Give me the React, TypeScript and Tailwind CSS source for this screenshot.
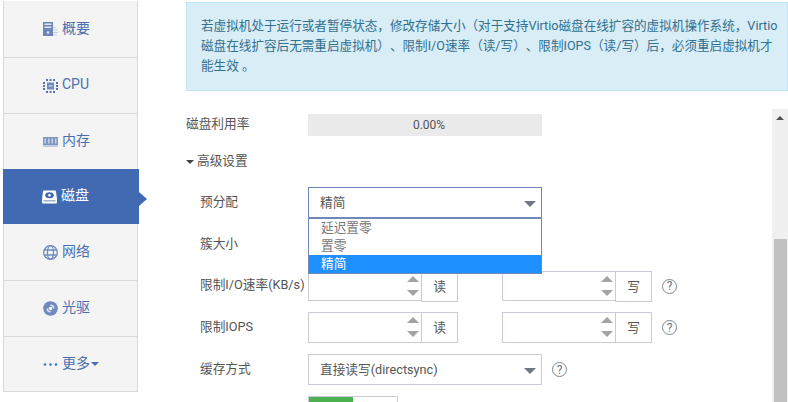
import type { ReactNode } from "react";

const iconColor = "#6f8bbd";

function ServerIcon() {
  return (
    <svg width="15" height="14" viewBox="0 0 15 14">
      <path d="M0 0h10v14H0z" fill="#6c86b8" />
      <path d="M1.500 1.500h7v1.500h-7zM1.500 4.500h7v1.500h-7z" fill="#dfe5f0" />
      <circle cx="5" cy="10.500" r="1.300" fill="#dfe5f0" />
      <path d="M10 5h3v1h-3zM10 7.500h5v1h-5zM10 10h5v1h-5zM10 12.500h4v1h-4z" fill="#c3cee2" />
    </svg>
  );
}

function CpuIcon() {
  return (
    <svg width="15" height="14" viewBox="0 0 15 14">
      <path d="M4 3.500h7v7H4z" fill={iconColor} />
      <path d="M5.500 6h4v2h-4z" fill="#a9bad8" />
      <path
        d="M3 0h2v2H3zM6.500 0h2v2h-2zM10 0h2v2h-2zM3 12h2v2H3zM6.500 12h2v2h-2zM10 12h2v2h-2zM0 3h2v2H0zM0 6h2v2H0zM0 9h2v2H0zM13 3h2v2h-2zM13 6h2v2h-2zM13 9h2v2h-2z"
        fill="#4f73b3"
      />
    </svg>
  );
}

function MemoryIcon() {
  return (
    <svg width="15" height="10" viewBox="0 0 15 10">
      <path d="M0 0h15v8H0z" fill="#7f97c3" />
      <path d="M1.500 1.500h1.500v5H1.500zM5 1.500h1.500v5H5zM8.500 1.500h1.500v5H8.500zM12 1.500h1.500v5H12z" fill="#c5d0e4" />
      <path d="M0 8h15v2H0z" fill="#c3cee2" />
    </svg>
  );
}

function DiskIcon() {
  return (
    <svg width="15" height="14" viewBox="0 0 15 14">
      <path d="M2 .5h11a1 1 0 0 1 1 1L15 9v3.500a1 1 0 0 1-1 1H1a1 1 0 0 1-1-1V9l1-7.500a1 1 0 0 1 1-1z" fill="#fff" />
      <ellipse cx="7.500" cy="5.200" rx="4.300" ry="3" fill="#4169b0" />
      <circle cx="7.500" cy="5.200" r="1.300" fill="#fff" />
      <path d="M1.500 10.500h12v.8h-12z" fill="#4169b0" />
    </svg>
  );
}

function GlobeIcon() {
  return (
    <svg width="15" height="15" viewBox="0 0 15 15" fill="none" stroke={iconColor} strokeWidth="1.300">
      <circle cx="7.500" cy="7.500" r="6.800" />
      <ellipse cx="7.500" cy="7.500" rx="3" ry="6.800" />
      <path d="M1 5h13M1 10h13" />
    </svg>
  );
}

function DiscIcon() {
  return (
    <svg width="15" height="15" viewBox="0 0 15 15">
      <circle cx="7.500" cy="7.500" r="7.300" fill={iconColor} />
      <path d="M7.500 3.500a4 4 0 0 1 4 4h-1.500a2.500 2.500 0 0 0-2.500-2.500zM7.500 11.500a4 4 0 0 1-4-4h1.500a2.500 2.500 0 0 0 2.500 2.500z" fill="#dfe5f0" />
      <circle cx="7.500" cy="7.500" r="1.800" fill="#f4f4f4" />
    </svg>
  );
}

function MoreIcon() {
  return (
    <svg width="15" height="15" viewBox="0 0 15 15" fill="#2f7cc4">
      <circle cx="2" cy="7.500" r="1.300" />
      <circle cx="7.500" cy="7.500" r="1.300" />
      <circle cx="13" cy="7.500" r="1.300" />
    </svg>
  );
}

function HelpIcon() {
  return (
    <div className="flex size-[15px] items-center justify-center rounded-full border border-[#7d8595] text-[12px] leading-none text-[#6f7685]">
      ?
    </div>
  );
}

const items: { label: string; icon: ReactNode; h: string; active?: boolean; more?: boolean }[] = [
  { label: "概要", icon: <ServerIcon />, h: "h-[57px] border-t" },
  { label: "CPU", icon: <CpuIcon />, h: "h-[56px]" },
  { label: "内存", icon: <MemoryIcon />, h: "h-[55px] border-b-0" },
  { label: "磁盘", icon: <DiskIcon />, h: "h-[55px]", active: true },
  { label: "网络", icon: <GlobeIcon />, h: "h-[57px]" },
  { label: "光驱", icon: <DiscIcon />, h: "h-[56px]" },
  { label: "更多", icon: <MoreIcon />, h: "h-[55px]", more: true },
];

function Sidebar() {
  return (
    <aside className="ml-[3px] mt-px flex w-[136px] shrink-0 flex-col text-[14px]">
      {items.map((item) =>
        item.active ? (
          <div key={item.label} className="relative flex h-[55px] w-[136px] items-center gap-[4px] bg-[#416ab3] pl-[39px] text-white">
            {item.icon}
            <span className="mb-[2px]">{item.label}</span>
            <div className="absolute -right-2 top-[23px] h-0 w-0 border-y-[7px] border-l-[8px] border-y-transparent border-l-[#416ab3]" />
          </div>
        ) : (
          <div
            key={item.label}
            className={`flex w-[135px] items-center gap-[4px] border border-t-0 border-[#d9d9d9] bg-[#f4f4f4] pl-[39px] text-[#4a6fb0] ${item.h}`}
          >
            {item.icon}
            <span className="mb-[2px]">{item.label}</span>
            {item.more && <div className="-ml-[3px] h-0 w-0 border-x-[4px] border-t-[4px] border-x-transparent border-t-[#4a6fb0]" />}
          </div>
        ),
      )}
    </aside>
  );
}

function Row({ label, children, compact }: { label: string; children: ReactNode; compact?: boolean }) {
  return (
    <div className={`flex items-center ${compact ? "h-[30px]" : "h-[31px]"}`}>
      <label className="w-[108px] shrink-0 whitespace-nowrap pb-[2px] text-[#555]">{label}</label>
      {children}
    </div>
  );
}

function Select({ value, focused }: { value: string; focused?: boolean }) {
  return (
    <div className={`relative h-[31px] w-[234px] border pl-[11px] leading-[29px] text-[#555] ${focused ? "border-[#6f88b8]" : "border-[#cccad8]"}`}>
      {value}
      <div className="absolute right-[5px] top-[13px] h-0 w-0 border-x-[6px] border-t-[6px] border-x-transparent border-t-[#6f7685]" />
    </div>
  );
}

function NumberField({ unit, compact }: { unit: string; compact?: boolean }) {
  return (
    <div className={`flex items-start ${compact ? "h-[30px]" : "h-[31px]"}`}>
      <div className={`relative w-[114px] border border-[#cccad8] ${compact ? "h-[30px]" : "h-[31px]"}`}>
        <div className="absolute right-[2px] top-[4px] h-0 w-0 border-x-[6px] border-b-[6px] border-x-transparent border-b-[#a3a3a3]" />
        <div className="absolute right-[2px] top-[18px] h-0 w-0 border-x-[6px] border-t-[6px] border-x-transparent border-t-[#a3a3a3]" />
      </div>
      <div className="-ml-px flex h-[31px] w-[37px] items-center justify-center border border-[#cccad8] text-[#555]">{unit}</div>
    </div>
  );
}

function LimitRow({ label, compact }: { label: string; compact?: boolean }) {
  return (
    <Row label={label} compact={compact}>
      <div className="flex items-center">
        <NumberField unit="读" compact={compact} />
        <div className="ml-[44px]">
          <NumberField unit="写" compact={compact} />
        </div>
        <div className="ml-[10px]">
          <HelpIcon />
        </div>
      </div>
    </Row>
  );
}

export default function App() {
  return (
    <div
      className="flex h-[402px] w-[788px] overflow-hidden bg-white text-[12.7px] [text-spacing-trim:space-all]"
      style={{ fontFamily: 'Roboto, "Noto Sans CJK SC", sans-serif' }}
    >
      <Sidebar />

      <main className="ml-[47px] mt-[2px] flex min-w-0 flex-1 flex-col">
        {/* Notice */}
        <div className="h-[89px] shrink-0 border border-[#bce8f1] bg-[#d9edf7] pl-[14px] pr-[8px] pt-[13px] text-[12.6px] leading-[20px] text-[#31708f]">
          若虚拟机处于运行或者暂停状态，修改存储大小（对于支持Virtio磁盘在线扩容的虚拟机操作系统，Virtio磁盘在线扩容后无需重启虚拟机）、限制I/O速率（读/写）、限制IOPS（读/写）后，必须重启虚拟机才能生效 。
        </div>

        <div className="mt-[18px] flex min-h-0 flex-1">
          <div className="min-w-0 flex-1">
            <div className="mt-[5px] flex h-[22px] items-center">
              <label className="w-[122px] pb-[2px] text-[#555]">磁盘利用率</label>
              <div className="flex h-[22px] w-[234px] items-center justify-center bg-[#eaeaea] pl-[8px] text-[12px] text-[#555]">0.00%</div>
            </div>

            <div className="mt-[16px] flex h-[20px] items-center gap-[3px] text-[#555]">
              <div className="h-0 w-0 border-x-[4px] border-t-[4px] border-x-transparent border-t-[#444]" />
              <span className="pb-[2px]">高级设置</span>
            </div>

            <div className="relative ml-[14px] mt-[15px] flex flex-col gap-[11px]">
              <Row label="预分配">
                <Select value="精简" focused />
              </Row>
              <Row label="簇大小">
                <div />
              </Row>
              <LimitRow label="限制I/O速率(KB/s)" compact />
              <LimitRow label="限制IOPS" />
              <Row label="缓存方式">
                <div className="flex items-center">
                  <Select value="直接读写(directsync)" />
                  <div className="ml-[10px]">
                    <HelpIcon />
                  </div>
                </div>
              </Row>
              <div className="ml-[108px] h-[20px] w-[90px] border border-[#cccad8]">
                <div className="h-full w-[44px] bg-[#4caf50]" />
              </div>

              {/* open select list */}
              <div className="absolute left-[108px] top-[31px] w-[234px] border border-[#6f88b8] bg-white text-[#777]">
                <div className="h-[18px] pl-[12px] leading-[17px]">延迟置零</div>
                <div className="h-[18px] pl-[12px] leading-[17px]">置零</div>
                <div className="h-[18px] bg-[#1e90ff] pl-[12px] leading-[17px] text-white">精简</div>
              </div>
            </div>
          </div>

          {/* Scrollbar */}
          <div className="relative flex w-[16px] shrink-0 flex-col bg-[#f0f0f0]">
            <div className="mx-auto mt-[7px] h-0 w-0 border-x-[4px] border-b-[4px] border-x-transparent border-b-[#505050]" />
            <div className="ml-[2px] mr-px mt-[119px] flex-1 bg-[#c1c1c1]" />
          </div>
        </div>
      </main>
    </div>
  );
}
